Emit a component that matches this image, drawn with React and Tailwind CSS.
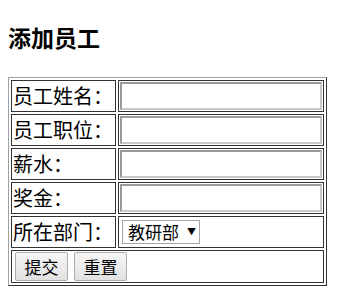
import React from "react";

const rows = [
    { label: "员工姓名：", type: "input" },
    { label: "员工职位：", type: "input" },
    { label: "薪水：", type: "input" },
    { label: "奖金：", type: "input" },
    { label: "所在部门：", type: "select" },
];

export default function App() {
    return (
        <div className="px-2 font-['Noto_Sans_CJK_SC',sans-serif] text-black bg-white min-h-[307px]">
            <h3 className="pt-[21px] mb-[24px] text-[23px] leading-[32px] font-bold">
                添加员工
            </h3>

            {/* Employee form */}
            <form>
                <table className="w-[319px] border-separate border-spacing-[2px] border border-t-[#a0a0a0] border-l-[#a0a0a0] border-r-[#333] border-b-[#333]">
                    <tbody>
                        {rows.map((row) => (
                            <tr key={row.label}>
                                <td className="w-[105px] h-[32px] p-[1px] border border-[#333] text-[20px] leading-[28px] whitespace-nowrap align-middle">
                                    {row.label}
                                </td>
                                <td className="h-[32px] p-[1px] border border-[#333] align-middle">
                                    {row.type === "input" ? (
                                        <input
                                            type="text"
                                            className="block w-[202px] h-[28px] border-2 border-t-[#9a9a9a] border-l-[#9a9a9a] border-r-[#c8c8c8] border-b-[#c8c8c8] outline-none px-1"
                                        />
                                    ) : (
                                        <div className="ml-[2px] w-[78px] h-[24px] border border-[#a6a6a6] flex items-center pl-[5px] text-[17px] leading-[22px]">
                                            <span>教研部</span>
                                            <span className="ml-[8px] text-[9px]">▼</span>
                                        </div>
                                    )}
                                </td>
                            </tr>
                        ))}
                        <tr>
                            <td colSpan={2} className="h-[32px] p-[1px] border border-[#333] align-middle">
                                <div className="flex gap-[6px] ml-[2px]">
                                    <button
                                        type="button"
                                        className="w-[53px] h-[29px] border border-[#adadad] rounded-[2px] bg-gradient-to-b from-[#f6f6f6] to-[#e1e1e1] text-[17px] leading-[22px]"
                                    >
                                        提交
                                    </button>
                                    <button
                                        type="button"
                                        className="w-[53px] h-[29px] border border-[#adadad] rounded-[2px] bg-gradient-to-b from-[#f6f6f6] to-[#e1e1e1] text-[17px] leading-[22px]"
                                    >
                                        重置
                                    </button>
                                </div>
                            </td>
                        </tr>
                    </tbody>
                </table>
            </form>
        </div>
    );
}
